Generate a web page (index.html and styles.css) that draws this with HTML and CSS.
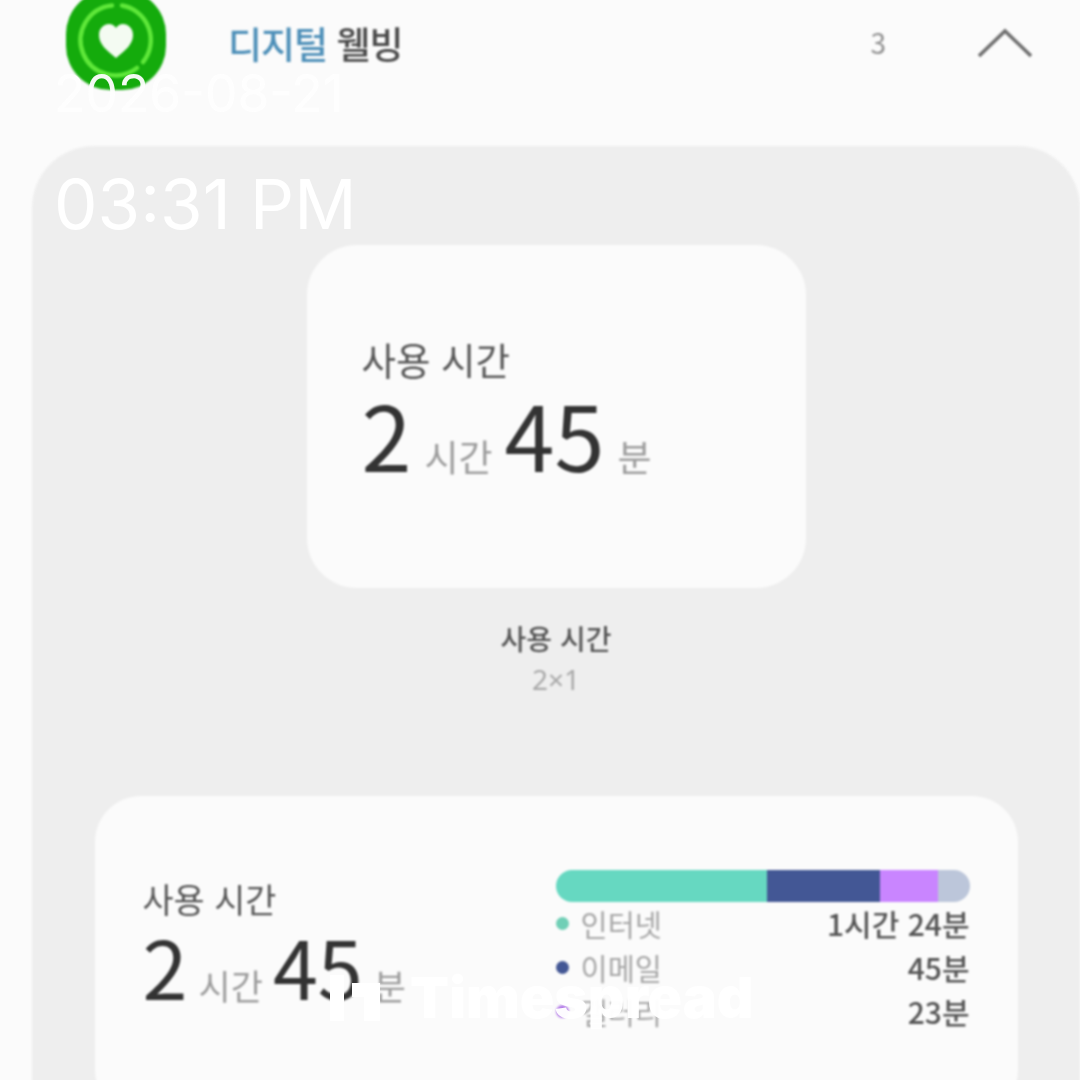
FILE: index.html
```html
<!DOCTYPE html>
<html lang="ko">
<head>
<meta charset="UTF-8">
<title>디지털 웰빙</title>
<link rel="stylesheet" href="styles.css">
</head>
<body>

<div class="screen">
    <div class="content">
        <div class="header">
            <svg class="app-icon" viewBox="0 0 100 100" width="100" height="100">
                <rect width="100" height="100" rx="44" fill="#14ab0c"/>
                <g fill="none" stroke="#5fe83a" stroke-width="4.5" stroke-linecap="round">
                    <path d="M46 15.5 A35 35 0 1 0 71 78"/>
                    <path d="M56 15.5 A35 35 0 0 1 77 72"/>
                </g>
                <path d="M50 68 C40 60 33 54 33 45 C33 38 38 34 43 34 C46 34 49 36 50 38 C51 36 54 34 57 34 C62 34 67 38 67 45 C67 54 60 60 50 68 Z" fill="#f4fbf2"/>
            </svg>
            <div class="title"><span class="title-blue">디지털</span> 웰빙</div>
            <div class="count">3</div>
            <svg class="chevron" viewBox="0 0 54 30" width="54" height="30">
                <path d="M1 28 L27 3 L53 28" fill="none" stroke="#6e6e6e" stroke-width="3.5"/>
            </svg>
        </div>

        <div class="panel">
            <div class="card small-card">
                <div class="usage-label">사용 시간</div>
                <div class="usage-time">
                    <span class="num">2</span><span class="unit">시간</span><span class="num">45</span><span class="unit">분</span>
                </div>
            </div>
            <div class="caption">
                <div class="caption-name">사용 시간</div>
                <div class="caption-size">2×1</div>
            </div>

            <div class="card wide-card">
                <div class="wide-left">
                    <div class="usage-label">사용 시간</div>
                    <div class="usage-time">
                        <span class="num">2</span><span class="unit">시간</span><span class="num">45</span><span class="unit">분</span>
                    </div>
                </div>
                <div class="wide-right">
                    <div class="bar">
                        <div class="seg seg-internet"></div>
                        <div class="seg seg-email"></div>
                        <div class="seg seg-messenger"></div>
                        <div class="seg seg-other"></div>
                    </div>
                    <ul class="legend">
                        <li><span class="dot dot-internet"></span><span class="app-name">인터넷</span><span class="app-time">1시간 24분</span></li>
                        <li><span class="dot dot-email"></span><span class="app-name">이메일</span><span class="app-time">45분</span></li>
                        <li><span class="dot dot-messenger"></span><span class="app-name">갤러리</span><span class="app-time">23분</span></li>
                    </ul>
                </div>
            </div>
        </div>
    </div>

    <div class="stamp stamp-date">2026-08-21</div>
    <div class="stamp stamp-time">03:31 PM</div>
    <div class="brand">
        <svg class="brand-mark" viewBox="0 0 50 46" width="50" height="46">
            <rect x="0" y="0" width="14" height="46" fill="#fff"/>
            <path d="M22 8 H50 V46 H34 V22 H22 Z" fill="#fff"/>
        </svg>
        <span>Timespread</span>
    </div>
</div>

</body>
</html>
```

FILE: styles.css
```css
html, body {
    margin: 0;
    padding: 0;
}

body {
    width: 1080px;
    height: 1080px;
    overflow: hidden;
    background: #fbfbfb;
    font-family: "Noto Sans CJK KR", "Noto Sans", sans-serif;
}

.screen {
    position: relative;
    width: 1080px;
    height: 1080px;
    overflow: hidden;
}

.content {
    filter: blur(0.9px);
}

/* header */
.header {
    display: flex;
    align-items: center;
    height: 146px;
    padding-left: 66px;
    padding-right: 48px;
    box-sizing: border-box;
}

.app-icon {
    flex: none;
    margin-top: -66px;
}

.title {
    margin-left: 62px;
    margin-top: -60px;
    font-size: 37px;
    font-weight: 500;
    line-height: 50px;
    letter-spacing: -1px;
    color: #4a4a4a;
}

.title-blue {
    color: #4d8fb8;
}

.count {
    margin-left: auto;
    margin-top: -62px;
    font-size: 28px;
    line-height: 36px;
    color: #8f8f8f;
}

.chevron {
    flex: none;
    margin-left: 92px;
    margin-top: -60px;
}

/* panel */
.panel {
    display: flex;
    flex-direction: column;
    align-items: center;
    width: 1048px;
    height: 1000px;
    margin-left: 32px;
    padding-top: 99px;
    box-sizing: border-box;
    background: #eeeeee;
    border-radius: 62px;
}

.card {
    background: #fbfbfb;
    box-sizing: border-box;
}

.small-card {
    width: 499px;
    height: 343px;
    padding: 91px 0 0 55px;
    border-radius: 50px;
}

.usage-label {
    font-size: 37.5px;
    line-height: 46px;
    color: #555;
}

.usage-time {
    display: flex;
    align-items: baseline;
    color: #333;
}

.num {
    font-size: 90px;
    line-height: 103px;
}

.unit {
    margin: 0 12px 0 13px;
    font-size: 37px;
    color: #9c9c9c;
}

/* caption */
.caption {
    height: 208px;
    padding-top: 29px;
    box-sizing: border-box;
    text-align: center;
}

.caption-name {
    font-size: 28px;
    font-weight: 500;
    line-height: 42px;
    color: #555;
}

.caption-size {
    font-family: "Noto Sans", sans-serif;
    font-size: 28px;
    line-height: 40px;
    color: #a8a8a8;
}

/* wide card */
.wide-card {
    display: flex;
    width: 923px;
    height: 320px;
    padding: 74px 48px 0 48px;
    border-radius: 46px;
}

.wide-left {
    width: 413px;
    padding-top: 7px;
}

.wide-left .usage-label {
    font-size: 33.8px;
    line-height: 44px;
}

.wide-left .num {
    font-size: 81px;
    line-height: 87px;
}

.wide-left .unit {
    margin: 0 10px 0 11px;
    font-size: 35px;
}

.wide-right {
    width: 414px;
}

.bar {
    display: flex;
    height: 32px;
    overflow: hidden;
    border-radius: 16px;
}

.seg-internet { width: 211px; background: #66d8c1; }
.seg-email { width: 113px; background: #435795; }
.seg-messenger { width: 58px; background: #c985ff; }
.seg-other { width: 32px; background: #bcc6da; }

.legend {
    list-style: none;
    margin: -1px 0 0 0;
    padding: 0;
}

.legend li {
    display: flex;
    align-items: center;
    height: 44px;
}

.dot {
    flex: none;
    width: 13px;
    height: 13px;
    margin-right: 12px;
    border-radius: 50%;
}

.dot-internet { background: #70cfb6; }
.dot-email { background: #435795; }
.dot-messenger { background: #b57ee8; }

.app-name {
    font-size: 29.5px;
    color: #a6a6a6;
}

.app-time {
    margin-left: auto;
    font-size: 30px;
    font-weight: 500;
    color: #555;
}

/* things printed over the screenshot */
.stamp {
    position: absolute;
    left: 54px;
    font-family: "Inter", "Liberation Sans", sans-serif;
    color: #fff;
    white-space: nowrap;
}

.stamp-date {
    top: 62px;
    font-size: 51.5px;
    line-height: 62px;
    opacity: 0.95;
}

.stamp-time {
    top: 166px;
    font-size: 69px;
    line-height: 76px;
}

.brand {
    position: absolute;
    left: 330px;
    top: 968px;
    display: flex;
    align-items: center;
    gap: 30px;
    font-family: "Inter", "Liberation Sans", sans-serif;
    font-size: 57px;
    font-weight: 900;
    line-height: 60px;
    color: rgba(255, 255, 255, 0.97);
}

.brand-mark {
    flex: none;
}
```
